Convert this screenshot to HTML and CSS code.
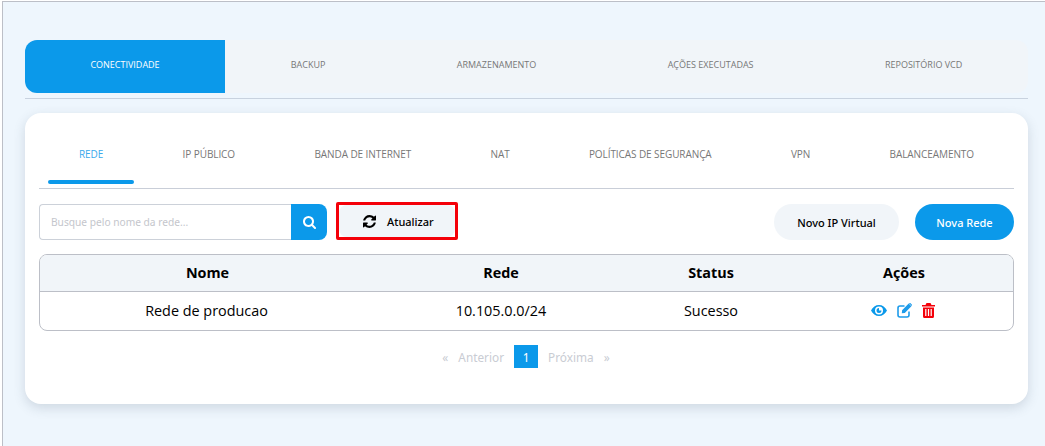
FILE: index.html
```html
<!DOCTYPE html>
<html lang="pt-BR">
<head>
<meta charset="utf-8">
<title>Conectividade</title>
<link rel="stylesheet" href="styles.css">
</head>
<body>
<main class="frame">
  <nav class="top-tabs">
    <a class="top-tab top-tab-active">CONECTIVIDADE</a>
    <a class="top-tab">BACKUP</a>
    <a class="top-tab">ARMAZENAMENTO</a>
    <a class="top-tab">AÇÕES EXECUTADAS</a>
    <a class="top-tab">REPOSITÓRIO VCD</a>
  </nav>
  <section class="card">
    <nav class="sub-tabs">
      <a class="sub-tab sub-tab-active">REDE</a>
      <a class="sub-tab">IP PÚBLICO</a>
      <a class="sub-tab">BANDA DE INTERNET</a>
      <a class="sub-tab">NAT</a>
      <a class="sub-tab">POLÍTICAS DE SEGURANÇA</a>
      <a class="sub-tab">VPN</a>
      <a class="sub-tab">BALANCEAMENTO</a>
    </nav>
    <div class="toolbar">
      <div class="search">
        <input class="search-input" type="text" placeholder="Busque pelo nome da rede...">
        <button class="search-btn" type="button" aria-label="Buscar">
          <svg class="icon-search" viewBox="0 0 1664 1664"><path fill="#fff" d="M1152 704q0-185-131.500-316.500t-316.500-131.500-316.500 131.500-131.500 316.500 131.500 316.500 316.500 131.500 316.500-131.500 131.500-316.500zm512 832q0 52-38 90t-90 38q-54 0-90-38l-343-342q-179 124-399 124-143 0-273.500-55.500t-225-150-150-225-55.500-273.500 55.500-273.500 150-225 225-150 273.500-55.500 273.500 55.500 225 150 150 225 55.500 273.500q0 220-124 399l343 343q37 37 37 90z"/></svg>
        </button>
      </div>
      <div class="refresh-mark">
        <button class="refresh-btn" type="button">
          <svg class="icon-refresh" viewBox="0 0 1536 1536"><path fill="#000" d="M1511 928q0 5-1 7-64 268-268 434.500t-478 166.500q-146 0-282.500-55t-243.500-157l-129 129q-19 19-45 19t-45-19-19-45v-448q0-26 19-45t45-19h448q26 0 45 19t19 45-19 45l-137 137q71 66 161 102t187 36q134 0 250-65t186-179q11-17 53-117 8-23 30-23h192q13 0 22.500 9.500t9.500 22.500zm25-800v448q0 26-19 45t-45 19h-448q-26 0-45-19t-19-45 19-45l138-138q-148-137-349-137-134 0-250 65t-186 179q-11 17-53 117-8 23-30 23h-199q-13 0-22.500-9.500t-9.500-22.500v-7q65-268 270-434.500t480-166.500q146 0 284 55.500t245 156.500l130-129q19-19 45-19t45 19 19 45z"/></svg>
          <span>Atualizar</span>
        </button>
      </div>
      <button class="pill pill-light" type="button">Novo IP Virtual</button>
      <button class="pill pill-blue" type="button">Nova Rede</button>
    </div>
    <div class="table-wrap">
      <table class="table">
        <thead>
          <tr><th class="col-nome">Nome</th><th class="col-rede">Rede</th><th class="col-status">Status</th><th>Ações</th></tr>
        </thead>
        <tbody>
          <tr>
            <td class="cell-nome">Rede de producao</td>
            <td>10.105.0.0/24</td>
            <td>Sucesso</td>
            <td>
              <div class="actions">
                <svg class="icon-eye" viewBox="0 0 16 11"><path fill="#0b99ea" fill-rule="evenodd" d="M8 0C4.600 0 1.700 2 0 5.500 1.700 9 4.600 11 8 11s6.300-2 8-5.500C14.300 2 11.400 0 8 0zm0 1.500a4 4 0 1 1 0 8 4 4 0 0 1 0-8z"/><path fill="#0b99ea" d="M8 3a2.500 2.500 0 1 0 2.500 2.500H8z"/></svg>
                <svg class="icon-edit" viewBox="0 0 15 15"><path fill="none" stroke="#1d9bea" stroke-width="1.600" d="M12 8.500V12a2 2 0 0 1-2 2H3a2 2 0 0 1-2-2V5a2 2 0 0 1 2-2h4.500"/><path fill="#1d9bea" d="M11.700.6 14.400 3.300 7.800 9.900 4.800 10.300 5.100 7.200zM12.300 0l1-.0L15 1.700v1L14.800 2.900 12 .2z"/></svg>
                <svg class="icon-trash" viewBox="0 0 13 15"><path fill="#f40009" fill-rule="evenodd" d="M4.500 0h4l1 2H13v1.500H0V2h3.500zM1 4.500h11V13.500A1.500 1.500 0 0 1 10.500 15h-8A1.500 1.500 0 0 1 1 13.500zM3.200 6v7h1.200V6zM5.900 6v7h1.200V6zM8.600 6v7h1.200V6z"/></svg>
              </div>
            </td>
          </tr>
        </tbody>
      </table>
    </div>
    <div class="pager">
      <span class="pager-item">«</span>
      <span class="pager-item">Anterior</span>
      <span class="pager-current">1</span>
      <span class="pager-item">Próxima</span>
      <span class="pager-item">»</span>
    </div>
  </section>
</main>
</body>
</html>
```
FILE: styles.css
```css
* { box-sizing: border-box; }
html, body { margin: 0; padding: 0; height: 100%; overflow: hidden; background: #fff; }
body { padding: 1px 0 0 2px; font-family: "Open Sans", sans-serif; }
.frame {
  height: 445px;
  background: #eef6fd;
  border-top: 1px solid #bcbfc7;
  border-left: 1px solid #bcbfc7;
  padding: 38px 17px 0 22px;
}
.top-tabs {
  display: flex;
  height: 53px;
  background: #f1f5f9;
  border-radius: 12px;
  position: relative;
  margin-bottom: 20px;
}
.top-tabs::after {
  content: "";
  position: absolute;
  left: 0; right: 0; bottom: -6px;
  height: 1px;
  background: #c8d2df;
}
.top-tab {
  flex: 1 1 auto;
  display: flex;
  align-items: center;
  justify-content: center;
  padding-bottom: 4px;
  font-size: 9px;
  color: #777;
  white-space: nowrap;
}
.top-tab-active {
  flex: 0 0 200px;
  background: #0b99ea;
  color: #fff;
  border-radius: 12px 0 0 12px;
}
.card {
  height: 291px;
  background: #fff;
  border-radius: 16px;
  padding: 0 14px;
  box-shadow: 0 4px 12px rgba(60, 80, 100, .18);
}
.sub-tabs {
  display: flex;
  justify-content: space-between;
  height: 76px;
  padding: 0 9px;
  border-bottom: 1px solid #c9ced8;
}
.sub-tab {
  position: relative;
  padding: 34px 31px 0;
  font-size: 10px;
  line-height: 14px;
  letter-spacing: -0.08px;
  color: #777;
  white-space: nowrap;
}
.sub-tab-active { color: #3aa9ec; }
.sub-tab-active::after {
  content: "";
  position: absolute;
  left: 0; right: 0; bottom: 4px;
  height: 4px;
  border-radius: 2px;
  background: #0b99ea;
}
.toolbar {
  display: flex;
  align-items: flex-start;
  margin-top: 13px;
  height: 38px;
}
.search { display: flex; height: 36px; margin-top: 2px; }
.search-input {
  width: 252px;
  height: 36px;
  border: 1px solid #ccd1d9;
  border-right: 0;
  border-radius: 4px 0 0 4px;
  padding: 0 11px;
  font-family: "Noto Sans", sans-serif;
  font-size: 10.200px;
  background: #fff;
  outline: 0;
}
.search-input::placeholder { color: #c4c6cc; opacity: 1; }
.search-btn {
  width: 36px;
  height: 36px;
  padding: 0;
  border: 0;
  border-radius: 0 8px 8px 0;
  background: #0b99ea;
  display: flex;
  align-items: center;
  justify-content: center;
}
.icon-search { width: 13px; height: 13px; }
.refresh-mark {
  margin-left: 9px;
  width: 122px;
  height: 38px;
  border: 3px solid #f40009;
  border-radius: 2px;
  background: #fff;
}
.refresh-btn {
  width: 100%;
  height: 100%;
  padding: 0 0 0 24px;
  border: 0;
  border-radius: 8px;
  background: #f1f5f9;
  display: flex;
  align-items: center;
  gap: 11px;
  font-family: "Noto Sans", sans-serif;
  font-size: 11px;
  font-weight: 500;
  color: #000;
}
.icon-refresh { width: 13px; height: 13px; }
.pill {
  height: 36px;
  margin-top: 2px;
  border: 0;
  border-radius: 18px;
  font-family: "Noto Sans", sans-serif;
  font-size: 11px;
  font-weight: 500;
  padding: 0;
}
.pill-light { width: 125px; margin-left: auto; background: #f1f5f9; color: #000; }
.pill-blue { width: 99px; margin-left: 16px; background: #0b99ea; color: #fff; }
.table-wrap {
  margin-top: 14px;
  border: 1px solid #bcbfc7;
  border-radius: 8px;
  overflow: hidden;
}
.table {
  width: 100%;
  border-collapse: collapse;
  table-layout: fixed;
  font-size: 14.400px;
  color: #000;
}
.col-nome { width: 335px; }
.col-rede { width: 252px; }
.col-status { width: 168px; }
.table th {
  height: 36px;
  padding: 0;
  background: #f1f5f9;
  border-bottom: 1px solid #bcbfc7;
  font-weight: 700;
  text-align: center;
}
.table td {
  height: 39px;
  padding: 0;
  text-align: center;
  font-weight: 400;
}
.table .cell-nome { padding-right: 2px; }
.actions {
  display: flex;
  justify-content: center;
  align-items: center;
  gap: 10px;
  padding-right: 3px;
}
.icon-eye { width: 16px; height: 11px; }
.icon-edit { width: 15px; height: 15px; }
.icon-trash { width: 13px; height: 15px; }
.pager {
  display: flex;
  justify-content: center;
  align-items: center;
  gap: 10px;
  margin-top: 14px;
  height: 23px;
  padding-right: 1px;
  font-family: "Noto Sans", sans-serif;
  font-size: 11.800px;
  color: #c9ccd3;
}
.pager-current {
  width: 24px;
  height: 23px;
  display: flex;
  align-items: center;
  justify-content: center;
  background: #0b99ea;
  color: #fff;
}
```
